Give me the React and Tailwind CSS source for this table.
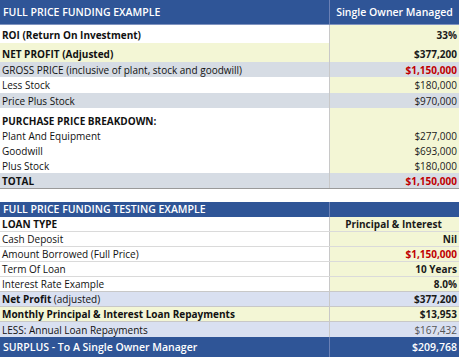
import React from "react";

const BLUE = "bg-[#2f5597]";
const YEL = "bg-[#f3f6d5]";
const GRAY = "bg-[#d6dce4]";
const LAV = "bg-[#d9e0f1]";

function Row({ label, value, h = "h-[15px]", align = "items-center", leftBg = "bg-white", rightBg = YEL, bold = false, vBold = false, red = false, vColor = "text-[#1a1a1a]", border = "", labelNode }) {
  return (
    <div className={`flex ${h} ${border}`}>
      <div className={`flex-1 flex ${align} pl-[2px] ${leftBg} border-r border-[#c8c8c8] ${bold ? "font-bold" : ""} text-[#111] whitespace-nowrap overflow-hidden`}>
        {labelNode || label}
      </div>
      <div className={`w-[129px] flex ${align} justify-end pr-[2px] ${rightBg} ${vBold ? "font-bold" : ""} ${red ? "text-[#c00000]" : vColor}`}>
        {value}
      </div>
    </div>
  );
}

export default function App() {
  return (
    <div className="w-[459px] h-[360px] bg-white text-[10px] leading-none" style={{ fontFamily: '"Open Sans", sans-serif' }}>
      {/* Table 1 */}
      <div className={`flex h-[25px] ${BLUE} text-white font-semibold text-[10.5px] border-b border-[#7f93bf]`}>
        <div className="flex-1 flex items-center pl-[3px] border-r border-[#6a80b5]">FULL PRICE FUNDING EXAMPLE</div>
        <div className="w-[129px] flex items-center justify-center">Single Owner Managed</div>
      </div>
      <Row label="ROI (Return On Investment)" value="33%" h="h-[18px]" align="items-end pb-[3px]" bold vBold />
      <Row label="NET PROFIT (Adjusted)" value="$377,200" h="h-[19px]" align="items-end pb-[3px]" leftBg={YEL} bold vBold />
      <Row label="GROSS PRICE (inclusive of plant, stock and goodwill)" value="$1,150,000" leftBg={GRAY} rightBg={GRAY} vBold red />
      <Row label="Less Stock" value="$180,000" h="h-[16px]" />
      <Row label="Price Plus Stock" value="$970,000" leftBg={GRAY} rightBg={GRAY} />
      <Row label="" value="" h="h-[5px]" />
      <Row label="PURCHASE PRICE BREAKDOWN:" value="" bold />
      <Row label="Plant And Equipment" value="$277,000" />
      <Row label="Goodwill" value="$693,000" />
      <Row label="Plus Stock" value="$180,000" />
      <Row label="TOTAL" value="$1,150,000" leftBg={GRAY} rightBg={GRAY} bold vBold red border="border-b border-[#9a9a9a]" h="h-[16px]" />

      <div className="h-[13px]" />

      {/* Table 2 */}
      <div className={`flex h-[15px] ${BLUE} text-white font-semibold text-[10.5px]`}>
        <div className="flex-1 flex items-center pl-[3px] border-r border-[#6a80b5]">FULL PRICE FUNDING TESTING EXAMPLE</div>
        <div className="w-[129px]" />
      </div>
      <Row label="LOAN TYPE" value={<span className="w-full text-center">Principal &amp; Interest</span>} bold vBold border="border-b border-[#dadada]" />
      <Row label="Cash Deposit" value="Nil" vBold border="border-b border-[#dadada]" />
      <Row label="Amount Borrowed (Full Price)" value="$1,150,000" vBold red border="border-b border-[#dadada]" />
      <Row label="Term Of Loan" value="10 Years" vBold border="border-b border-[#dadada]" />
      <Row label="Interest Rate Example" value="8.0%" vBold border="border-b border-[#c8c8c8]" />
      <Row labelNode={<span><b>Net Profit</b> (adjusted)</span>} value="$377,200" leftBg={LAV} rightBg={LAV} vBold border="border-b border-[#c8c8c8]" />
      <Row labelNode={<span>Monthly Principal &amp; Interest Loan Repayments</span>} value="$13,953" leftBg={YEL} bold vBold border="border-b border-[#c8c8c8]" />
      <Row label="LESS: Annual Loan Repayments" value="$167,432" leftBg={LAV} rightBg={LAV} vColor="text-[#555]" />
      <div className={`flex h-[20px] ${BLUE} text-white font-semibold text-[10.5px]`}>
        <div className="flex-1 flex items-center pl-[3px] border-r border-[#6a80b5]">SURPLUS - To A Single Owner Manager</div>
        <div className="w-[129px] flex items-center justify-end pr-[2px]">$209,768</div>
      </div>
    </div>
  );
}
